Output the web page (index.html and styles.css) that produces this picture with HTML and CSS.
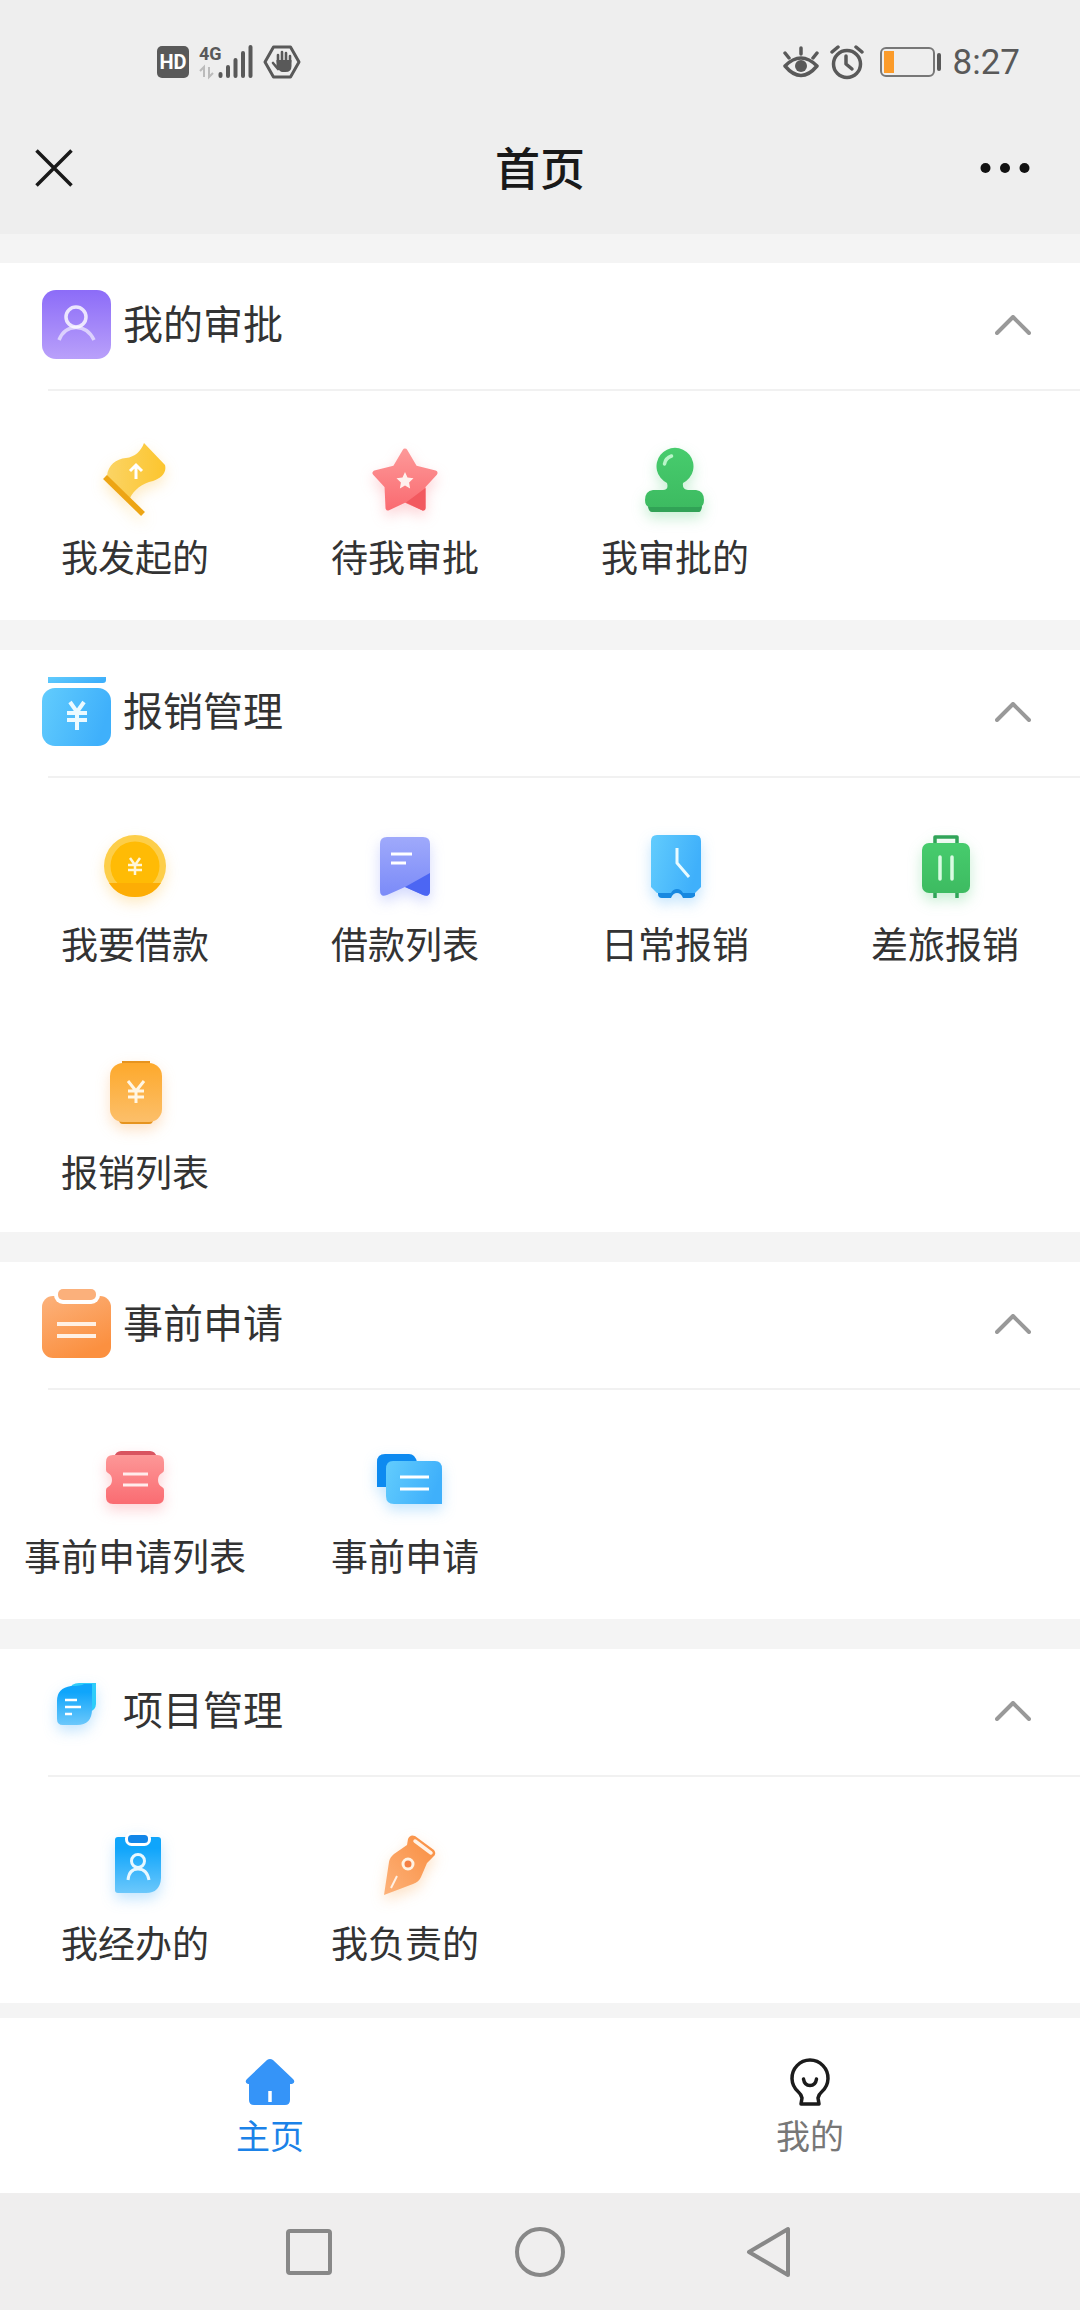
FILE: index.html
```html
<!DOCTYPE html>
<html lang="zh-CN">
<head>
<meta charset="utf-8">
<meta name="viewport" content="width=device-width, initial-scale=1">
<title>首页</title>
<link rel="stylesheet" href="styles.css">
</head>
<body>
<svg class="defs" aria-hidden="true">
  <defs>
    <linearGradient id="purple" x1="0" y1="0" x2="0" y2="1"><stop offset="0" stop-color="#8c6cf8"/><stop offset="1" stop-color="#b9a0fa"/></linearGradient>
    <linearGradient id="blue" x1="0" y1="0" x2="1" y2="0.3"><stop offset="0" stop-color="#62ccfd"/><stop offset="1" stop-color="#3fb0fb"/></linearGradient>
    <linearGradient id="orange" x1="0" y1="0" x2="0.5" y2="1"><stop offset="0" stop-color="#fcb27c"/><stop offset="1" stop-color="#fb9040"/></linearGradient>
    <linearGradient id="sky" x1="0" y1="0" x2="0" y2="1"><stop offset="0.2" stop-color="#0fa5fb"/><stop offset="1" stop-color="#6cc8fb"/></linearGradient>
    <linearGradient id="yellow" x1="0" y1="0" x2="1" y2="0"><stop offset="0" stop-color="#fbd465"/><stop offset="1" stop-color="#fcc52e"/></linearGradient>
    <linearGradient id="red" x1="0" y1="0" x2="0" y2="1"><stop offset="0" stop-color="#fd9797"/><stop offset="1" stop-color="#fa6c72"/></linearGradient>
    <linearGradient id="green" x1="0" y1="0" x2="0" y2="1"><stop offset="0" stop-color="#47cc6d"/><stop offset="1" stop-color="#3dbb61"/></linearGradient>
    <linearGradient id="violet" x1="0" y1="0" x2="0" y2="1"><stop offset="0" stop-color="#9fa9fb"/><stop offset="1" stop-color="#7b8bf8"/></linearGradient>
    <linearGradient id="amber" x1="0" y1="0" x2="0" y2="1"><stop offset="0" stop-color="#fda92c"/><stop offset="1" stop-color="#fcbf6a"/></linearGradient>
    <linearGradient id="pen" x1="0" y1="1" x2="1" y2="0"><stop offset="0" stop-color="#fdb27a"/><stop offset="1" stop-color="#f98d3f"/></linearGradient>
  </defs>
</svg>

<div class="status">
  <div class="status-left">
    <svg width="32" height="32" viewBox="0 0 32 32"><rect width="32" height="32" rx="5" fill="#595959"/><text x="16" y="23" class="hd">HD</text></svg>
    <svg class="signal" width="54" height="40" viewBox="0 0 54 40">
      <text x="0" y="18" class="net">4G</text>
      <path d="M5 35V25l-4 4M10 25v10l4-4" fill="none" stroke="#bbb" stroke-width="2"/>
      <path d="M21.500 32v2M29 25v9M36.500 18v16M44 11v23M51.500 5v29" stroke="#595959" stroke-width="4" stroke-linecap="round"/>
    </svg>
    <svg width="38" height="36" viewBox="0 0 38 36">
      <path d="M10.500 3h17L36 18l-8.500 15h-17L2 18z" fill="none" stroke="#595959" stroke-width="3" stroke-linejoin="round"/>
      <path d="M15 18V11M19 17V8M23 17V9M27 18V12M15 25l-5-6" stroke="#595959" stroke-width="2.600" stroke-linecap="round"/>
      <path d="M13.500 16h15v6q0 6-6 6h-3q-3 0-6-6z" fill="#595959"/>
    </svg>
  </div>
  <div class="status-right">
    <svg width="36" height="34" viewBox="0 0 36 34">
      <path d="M2 21Q18 5 34 21Q18 40 2 21z" fill="none" stroke="#595959" stroke-width="3.500" stroke-linejoin="round"/>
      <circle cx="18" cy="21" r="6" fill="#595959"/>
      <path d="M18 9V3M6 13L2 8M30 13l4-5" stroke="#595959" stroke-width="3.500" stroke-linecap="round"/>
    </svg>
    <svg class="alarm" width="34" height="36" viewBox="0 0 34 36">
      <circle cx="17" cy="20" r="13.500" fill="none" stroke="#595959" stroke-width="3.500"/>
      <path d="M16 12v8l6 5" fill="none" stroke="#595959" stroke-width="3.500" stroke-linecap="round" stroke-linejoin="round"/>
      <path d="M2 8l6-5M32 8l-6-5" stroke="#595959" stroke-width="3.500" stroke-linecap="round"/>
    </svg>
    <svg class="battery" width="62" height="30" viewBox="0 0 62 30">
      <rect x="1" y="1" width="53" height="28" rx="5" fill="none" stroke="#777" stroke-width="2"/>
      <rect x="4" y="4" width="10" height="22" fill="#fb9b2a"/>
      <rect x="57" y="6" width="4" height="18" rx="2" fill="#595959"/>
    </svg>
    <span class="clock">8:27</span>
  </div>
</div>

<header class="topbar">
  <button class="icon-btn" type="button" aria-label="关闭"><svg width="38" height="38" viewBox="0 0 38 38"><path d="M1.500 1.500l35 35M36.500 1.500l-35 35" stroke="#191919" stroke-width="3.500"/></svg></button>
  <h1>首页</h1>
  <button class="icon-btn" type="button" aria-label="更多"><svg width="50" height="38" viewBox="0 0 50 38"><circle cx="5.500" cy="19" r="5" fill="#111"/><circle cx="25" cy="19" r="5" fill="#111"/><circle cx="44.500" cy="19" r="5" fill="#111"/></svg></button>
</header>

<main>
  <section>
    <button class="head" type="button" aria-expanded="true">
      <svg class="badge" viewBox="0 0 69 69"><rect width="69" height="69" rx="14" fill="url(#purple)"/><circle cx="34" cy="27" r="10" fill="none" stroke="#fff" stroke-opacity=".8" stroke-width="3.500"/><path d="M17 50Q22 37.500 34 37.500T52 50" fill="none" stroke="#fff" stroke-opacity=".6" stroke-width="3.500"/></svg>
      <span>我的审批</span>
      <svg class="chevron" viewBox="0 0 36 20"><path d="M2 18L18 2l16 16"/></svg>
    </button>
    <nav class="grid">
      <a href="#started"><svg class="glow-yellow" viewBox="0 0 90 90"><path d="M54 6L75 28C77 36 71 41 63 44 52 46 44 53 40 61L17 39C18 28 26 22 36 21 45 20 51 14 54 6z" fill="url(#yellow)"/><path d="M15 40l38 37" stroke="#eda514" stroke-width="5.500"/><path d="M46 42V28M40 34l6-6 6 6" fill="none" stroke="#fff" stroke-width="3"/></svg>我发起的</a>
      <a href="#pending"><svg class="glow-red" viewBox="0 0 90 90"><path d="M45 14L55 31 75 36 63 49 63 71 45 63 28 71 27 49 15 36 35 31z" fill="url(#red)" stroke="url(#red)" stroke-width="5" stroke-linejoin="round"/><path d="M46 65.500L65.500 51v20q0 3-3 2.500z" fill="#f2595f"/><path d="M45 35l2.500 5.500 6 .8-4.400 4.200 1 6L45 48.600l-5.100 2.900 1-6-4.400-4.200 6-.8z" fill="#fff0ee"/></svg>待我审批</a>
      <a href="#approved"><svg class="glow-green" viewBox="0 0 90 90"><path d="M20 62h50l2 8q-1 5-3 5H22q-3 0-4-5z" fill="#31a256"/><path d="M37 46a18.500 18.500 0 1 1 16 0q-1 7 5 7h8q8 1 8 10 0 7-5 7H20q-5 0-5-7 0-9 8-10h10q6 0 4-7z" fill="url(#green)"/><path d="M34.500 27q1-6 7-8" fill="none" stroke="#b9f5c9" stroke-width="3.500" stroke-linecap="round"/></svg>我审批的</a>
    </nav>
  </section>

  <section>
    <button class="head" type="button" aria-expanded="true">
      <svg class="badge" viewBox="0 0 69 69"><path d="M6 0h58v3q0 3-3 3H6z" fill="url(#blue)"/><rect y="11" width="69" height="58" rx="13" fill="url(#blue)"/><path d="M28 25l7 10 7-10M35 35v18M25 36h20M25 43h20" fill="none" stroke="#ecfaff" stroke-width="4"/></svg>
      <span>报销管理</span>
      <svg class="chevron" viewBox="0 0 36 20"><path d="M2 18L18 2l16 16"/></svg>
    </button>
    <nav class="grid">
      <a href="#borrow"><svg class="glow-yellow" viewBox="0 0 90 90"><circle cx="45" cy="42" r="31" fill="#fdce49"/><circle cx="45" cy="42" r="24.500" fill="#ffbb05"/><path d="M19 59h52Q62 73 45 73T19 59z" fill="#fdad05"/><path d="M40 34l5 7 5-7M45 41v10M38 41h14M38 46h14" fill="none" stroke="#fff6d8" stroke-width="2.500"/></svg>我要借款</a>
      <a href="#loans"><svg class="glow-violet" viewBox="0 0 90 90"><path d="M27 13h36q7 0 7 7v46q0 8-7 5L45 63 27 71q-7 3-7-5V20q0-7 7-7z" fill="url(#violet)"/><path d="M45 63l25-14v17q0 8-7 5z" fill="#4c66f3"/><path d="M31 30h21M31 39h15" stroke="#fff" stroke-width="3"/></svg>借款列表</a>
      <a href="#daily"><svg class="glow-blue" viewBox="0 0 90 90"><path d="M28 65h37v7q-2 2-4 2h-8q-2-5-6-5t-6 5h-9q-4 0-4-4z" fill="#1788e0"/><path d="M27 11h38q6 0 6 6v46l-6 6H53q-2-4-6-4t-6 4H27l-6-6V17q0-6 6-6z" fill="url(#blue)"/><path d="M47 24v15l12 14" fill="none" stroke="#e9fbff" stroke-width="3"/></svg>日常报销</a>
      <a href="#travel"><svg class="glow-green" viewBox="0 0 90 90"><path d="M35 20v-7h22v7M35 68v6M57 68v6" fill="none" stroke="#30a458" stroke-width="3.500" stroke-linejoin="round"/><rect x="22" y="19" width="48" height="50" rx="7" fill="url(#green)"/><path d="M40 33v22M52 33v22" stroke="#d9fbe2" stroke-width="3.500" stroke-linecap="round"/></svg>差旅报销</a>
      <a href="#reimburse"><svg class="glow-orange" viewBox="0 0 90 90"><path d="M32 9h28v10H32zM25 60h42l-5 11q-1 1-3 1H33q-2 0-3-1z" fill="#e6941f"/><rect x="20" y="11" width="52" height="59" rx="13" fill="url(#amber)"/><path d="M38 29l8 10 8-10M46 39v12M38 39h16M38 45h16" fill="none" stroke="#fff6e4" stroke-width="3"/></svg>报销列表</a>
    </nav>
  </section>

  <section>
    <button class="head" type="button" aria-expanded="true">
      <svg class="badge" viewBox="0 0 69 69"><rect y="7" width="69" height="62" rx="11" fill="url(#orange)"/><rect x="12" y="-4" width="46" height="19" rx="9" fill="#fff"/><rect x="16" width="38" height="11" rx="5" fill="#fbb07b"/><path d="M15 35h39M15 47h39" stroke="#fff0e4" stroke-width="4"/></svg>
      <span>事前申请</span>
      <svg class="chevron" viewBox="0 0 36 20"><path d="M2 18L18 2l16 16"/></svg>
    </button>
    <nav class="grid">
      <a href="#prior-list"><svg class="glow-red" viewBox="0 0 90 90"><path d="M24 21q2-6 7-6h29q5 0 7 6z" fill="#d95460"/><path d="M23 19h44q7 0 7 7v8q0 2-2 3-4 2-4 7t4 7q2 1 2 3v7q0 7-7 7H23q-7 0-7-7v-7q0-2 2-3 4-2 4-7t-4-7q-2-1-2-3v-8q0-7 7-7z" fill="url(#red)"/><path d="M33 38h25M33 49h25" stroke="#ffeceb" stroke-width="3"/></svg>事前申请列表</a>
      <a href="#prior"><svg class="glow-blue" viewBox="0 0 90 90"><path d="M17 51V26q0-8 8-8h24q6 0 8 8v25z" fill="#0d8af0"/><path d="M33 25h42q7 0 7 8v35H34q-8 0-8-8V33q0-8 7-8z" fill="url(#blue)"/><path d="M40 41h29M40 53h29" stroke="#fff" stroke-width="3"/></svg>事前申请</a>
    </nav>
  </section>

  <section>
    <button class="head" type="button" aria-expanded="true">
      <svg class="badge glow-blue" viewBox="0 0 69 69"><path d="M27 14q2-7 10-7h17v21q0 6-8 9z" fill="#2dccfa"/><path d="M29 10q10 0 13-2h8v25q0 16-15 16H21q-6 0-6-6V25q0-13 14-15z" fill="url(#sky)"/><path d="M23 24h12M23 31h16M23 38h7" stroke="#fff" stroke-width="2.500"/></svg>
      <span>项目管理</span>
      <svg class="chevron" viewBox="0 0 36 20"><path d="M2 18L18 2l16 16"/></svg>
    </button>
    <nav class="grid">
      <a href="#handled"><svg class="glow-blue" viewBox="0 0 90 90"><path d="M28 14h40q3 0 3 3v38q-1 15-15 15H28q-3 0-3-3V17q0-3 3-3z" fill="url(#sky)"/><rect x="36.500" y="10.500" width="23" height="11" rx="5" fill="#1286e8" stroke="#fff" stroke-width="3"/><circle cx="48" cy="38" r="6.500" fill="none" stroke="#e8f8ff" stroke-width="3"/><path d="M38 57q1-11 10-11t11 11" fill="none" stroke="#e8f8ff" stroke-width="3"/></svg>我经办的</a>
      <a href="#owned"><svg class="glow-orange" viewBox="0 0 90 90"><path d="M24 72L29 39q1-5 5-8l13-9 1-6q2-5 7-3l19 14q3 4-1 7l-6 6-6 14q-2 5-8 7z" fill="url(#pen)"/><path d="M55 18l16 12" stroke="#fff2e6" stroke-width="3.500" stroke-linecap="round"/><circle cx="48" cy="41" r="5" fill="#f47f43" stroke="#fff2e2" stroke-width="3"/><path d="M37 53l-6 12" stroke="#fff0e4" stroke-width="2"/></svg>我负责的</a>
    </nav>
  </section>
</main>

<nav class="tabs">
  <a class="active" href="#home"><svg width="50" height="48" viewBox="0 0 50 48"><path d="M22 2q3-2 6 0l20 19q3 3-1 5h-2v16q0 5-5 5H9q-5 0-5-5V26H3q-4-2-1-5z" fill="#3594f8"/><path d="M25 33v11" stroke="#fff" stroke-width="3.500"/></svg>主页</a>
  <a href="#me"><svg width="50" height="48" viewBox="0 0 50 48"><path d="M16 46l1-6q-1-4-4-6.500a18 18 0 1 1 24 0q-3 2.500-4 6.500l1 6z" fill="none" stroke="#1b1b1b" stroke-width="3.500" stroke-linejoin="round"/><path d="M18.500 21q1 6.500 6.500 6.500t6.500-6.500" fill="none" stroke="#1b1b1b" stroke-width="3.500" stroke-linecap="round"/></svg>我的</a>
</nav>

<footer class="sysnav">
  <button type="button" aria-label="最近任务"><svg width="52" height="52" viewBox="0 0 52 52"><rect x="5" y="5" width="42" height="42" rx="2"/></svg></button>
  <button type="button" aria-label="主屏幕"><svg width="52" height="52" viewBox="0 0 52 52"><circle cx="26" cy="26" r="23"/></svg></button>
  <button type="button" aria-label="返回"><svg width="52" height="52" viewBox="0 0 52 52"><path d="M43 3v46L4 26z"/></svg></button>
</footer>
</body>
</html>
```
FILE: styles.css
```css
* {
  box-sizing: border-box;
}

body {
  margin: 0;
  min-height: 100vh;
  display: flex;
  flex-direction: column;
  background: #f4f4f4;
  color: #333;
  font-family: "Noto Sans CJK SC", sans-serif;
}

svg {
  display: block;
  flex: none;
}

button {
  border: 0;
  padding: 0;
  background: none;
  color: inherit;
  font: inherit;
}

a {
  color: inherit;
  text-decoration: none;
}

.defs {
  position: absolute;
  width: 0;
  height: 0;
}

.status {
  display: flex;
  justify-content: space-between;
  align-items: center;
  height: 124px;
  padding: 0 60px 0 157px;
  background: #eee;
}

.status-left,
.status-right {
  display: flex;
  align-items: center;
}

.status-left {
  gap: 10px;
}

.status-right {
  gap: 11px;
}

.battery {
  margin-left: 5px;
}

.clock {
  padding-top: 2px;
  color: #595959;
  font: 35px/40px Roboto, sans-serif;
}

.hd {
  fill: #fff;
  font: bold 20px Roboto, sans-serif;
  text-anchor: middle;
}

.net {
  fill: #595959;
  font: bold 18px Roboto, sans-serif;
}

.topbar {
  display: grid;
  grid-template-columns: 1fr auto 1fr;
  align-items: center;
  height: 110px;
  padding: 0 50px 22px 35px;
  background: #eee;
}

.topbar h1 {
  margin: 0;
  padding: 0 0 2px 15px;
  color: #191919;
  font-size: 45px;
  font-weight: 500;
  line-height: 60px;
}

.icon-btn {
  justify-self: start;
}

.icon-btn:last-child {
  justify-self: end;
}

main {
  flex: 1;
  display: flex;
  flex-direction: column;
  gap: 30px;
  padding: 29px 0 15px;
}

section {
  background: #fff;
}

.head {
  display: flex;
  align-items: center;
  gap: 12px;
  width: 100%;
  height: 129px;
  padding: 0 49px 6px 42px;
  background: linear-gradient(#f1f1f1, #f1f1f1) 48px 126px / 100% 2px no-repeat;
  font-size: 40px;
  line-height: 60px;
  text-align: left;
}

.head span {
  flex: 1;
  padding-bottom: 6px;
}

.badge {
  width: 69px;
  height: 69px;
}

.chevron {
  width: 36px;
  height: 20px;
  fill: none;
  stroke: #999;
  stroke-width: 4;
  stroke-linecap: round;
  stroke-linejoin: round;
}

.grid {
  display: grid;
  grid-template-columns: repeat(4, 1fr);
  align-content: start;
  row-gap: 3px;
  min-height: 228px;
}

section:last-child .grid {
  min-height: 0;
}

.grid a {
  display: flex;
  flex-direction: column;
  align-items: center;
  padding: 45px 0 32px;
  font-size: 37px;
  line-height: 58px;
  white-space: nowrap;
}

.grid svg {
  width: 90px;
  height: 90px;
}

.glow-yellow {
  filter: drop-shadow(0 6px 7px rgb(253 190 60 / 30%));
}

.glow-red {
  filter: drop-shadow(0 6px 7px rgb(250 110 120 / 30%));
}

.glow-green {
  filter: drop-shadow(0 6px 7px rgb(70 200 110 / 30%));
}

.glow-violet {
  filter: drop-shadow(0 6px 7px rgb(110 130 250 / 30%));
}

.glow-blue {
  filter: drop-shadow(0 6px 7px rgb(60 170 250 / 30%));
}

.glow-orange {
  filter: drop-shadow(0 6px 7px rgb(250 160 70 / 30%));
}

.tabs {
  display: grid;
  grid-template-columns: 1fr 1fr;
  background: #fff;
}

.tabs a {
  display: flex;
  flex-direction: column;
  align-items: center;
  gap: 6px;
  padding: 40px 0 36px;
  color: #777;
  font-size: 34px;
  line-height: 45px;
}

.tabs .active {
  color: #1b82e8;
}

.sysnav {
  display: flex;
  justify-content: center;
  align-items: center;
  gap: 179px;
  height: 118px;
  background: #efeeee;
}

.sysnav svg {
  fill: none;
  stroke: #888;
  stroke-width: 4;
  stroke-linejoin: round;
}
```
